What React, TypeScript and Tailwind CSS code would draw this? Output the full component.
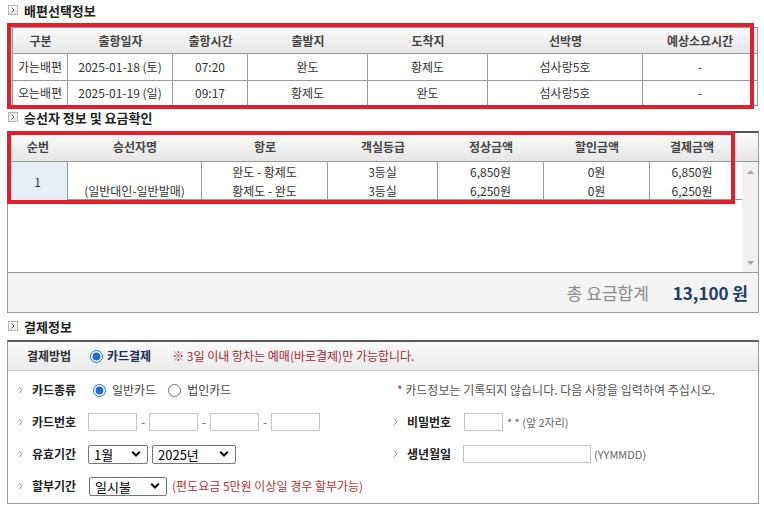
import type { ReactNode } from "react";

type Cell = string;

const TRIP_HEAD = ["구분", "출항일자", "출항시간", "출발지", "도착지", "선박명", "예상소요시간"];
const TRIP_ROWS: Cell[][] = [
  ["가는배편", "2025-01-18 (토)", "07:20", "완도", "황제도", "섬사랑5호", "-"],
  ["오는배편", "2025-01-19 (일)", "09:17", "황제도", "완도", "섬사랑5호", "-"],
];

const FARE_HEAD = ["순번", "승선자명", "항로", "객실등급", "정상금액", "할인금액", "결제금액", ""];
const FARE_COLS: [string, string][] = [
  ["", "(일반대인-일반발매)"],
  ["완도 - 황제도", "황제도 - 완도"],
  ["3등실", "3등실"],
  ["6,850원", "6,250원"],
  ["0원", "0원"],
  ["6,850원", "6,250원"],
];

function SectionTitle({ children }: { children: ReactNode }) {
  return (
    <div className="flex h-[20px] items-center gap-[6px] pl-[8px]">
      <span className="flex h-[10px] w-[10px] items-center justify-center border border-[#b5b5b5] bg-gradient-to-b from-white to-[#e9e9e9]">
        <svg width="4" height="6" viewBox="0 0 4 6">
          <path d="M0.6 0.6 L3 3 L0.6 5.4" fill="none" stroke="#555" strokeWidth="1" />
        </svg>
      </span>
      <h2 className="text-[13px] font-bold leading-none text-[#222]">{children}</h2>
    </div>
  );
}

function Chevron() {
  return (
    <svg width="5" height="8" viewBox="0 0 5 8" className="shrink-0">
      <path d="M1 1 L4 4 L1 7" fill="none" stroke="#9a9a9a" strokeWidth="1" />
    </svg>
  );
}

function Select({ value, className }: { value: string; className: string }) {
  return (
    <span className={`relative inline-flex ${className}`}>
      <select
        defaultValue={value}
        className="h-[19px] w-full appearance-none rounded-[2px] border border-[#767676] bg-white pl-[5px] text-[13px] leading-[17px] text-black"
      >
        <option>{value}</option>
      </select>
      <svg width="10" height="7" viewBox="0 0 10 7" className="pointer-events-none absolute right-[7px] top-1/2 -translate-y-1/2">
        <path d="M1.2 1.2 L5 5 L8.8 1.2" fill="none" stroke="#111" strokeWidth="2" />
      </svg>
    </span>
  );
}

function Field({ label, children }: { label: string; children?: ReactNode }) {
  return (
    <div className="flex h-[32px] items-center">
      <Chevron />
      <span className="ml-[9px] w-[56px] shrink-0 text-[12px] font-bold leading-none text-[#222]">{label}</span>
      {children}
    </div>
  );
}

export default function App() {
  return (
    <div className="relative h-[506px] w-[764px] overflow-hidden bg-white font-['Noto_Sans_CJK_KR','Noto_Sans',sans-serif] text-[#333]">
      <SectionTitle>배편선택정보</SectionTitle>

      {/* trip table */}
      <div className="ml-[12px] mt-[7px] w-[746px] border border-[#999]">
        <div className="grid h-[26px] grid-cols-[55px_105px_75px_120px_120px_155px_114px] items-center border-b border-[#999] bg-gradient-to-b from-[#fbfbfb] to-[#e6e6e6] text-center text-[12px] font-bold text-[#444]">
          {TRIP_HEAD.map((h) => (
            <span key={h}>{h}</span>
          ))}
        </div>
        {TRIP_ROWS.map((row, i) => (
          <div
            key={i}
            className={`grid grid-cols-[55px_105px_75px_120px_120px_155px_114px] text-center text-[12px] ${i === 0 ? "h-[27px] border-b border-[#999]" : "h-[24px]"}`}
          >
            {row.map((c, j) => (
              <span key={j} className={`flex items-center justify-center ${j < 6 ? "border-r border-[#999]" : ""}`}>
                {c}
              </span>
            ))}
          </div>
        ))}
      </div>

      <div className="mt-[1px]">
        <SectionTitle>승선자 정보 및 요금확인</SectionTitle>
      </div>

      {/* fare box */}
      <div className="ml-[7px] mt-[4px] w-[752px] border-x border-b border-t-2 border-x-[#999] border-b-[#999] border-t-[#555]">
        <div className="grid h-[29px] grid-cols-[60px_134px_126px_110px_106px_106px_84px_24px] items-center border-b border-[#999] bg-gradient-to-b from-[#fbfbfb] to-[#e6e6e6] text-center text-[12px] font-bold text-[#444]">
          {FARE_HEAD.map((h, i) => (
            <span key={i}>{h}</span>
          ))}
        </div>
        <div className="flex h-[110px]">
          <div className="flex-1">
            <div className="grid h-[38px] grid-cols-[60px_134px_126px_110px_106px_106px_84px_8px] border-b border-[#999] text-center text-[12px] leading-[19px]">
              <span className="flex items-center justify-center border-r border-[#999] bg-[#e8eef7]">1</span>
              {FARE_COLS.map((lines, j) => (
                <span key={j} className={`flex flex-col justify-center ${j < 5 ? "border-r border-[#999]" : ""}`}>
                  <span>{lines[0] || "\u00a0"}</span>
                  <span>{lines[1]}</span>
                </span>
              ))}
              <span />
            </div>
          </div>
          <div className="flex w-[16px] flex-col items-center justify-between bg-[#f1f1f1] pb-[7px] pt-[8px]">
            <svg width="7" height="4" viewBox="0 0 7 4">
              <path d="M0 4 L3.5 0 L7 4 Z" fill="#a6a6a6" />
            </svg>
            <svg width="7" height="4" viewBox="0 0 7 4">
              <path d="M0 0 L3.5 4 L7 0 Z" fill="#a6a6a6" />
            </svg>
          </div>
        </div>
        <div className="flex h-[40px] items-center justify-end gap-[24px] border-t border-[#999] bg-[#f4f4f4] pr-[10px]">
          <span className="text-[17px] leading-none text-[#8a8a8a]">총 요금합계</span>
          <span className="text-[17px] font-bold leading-none text-[#1d3b6a]">13,100 원</span>
        </div>
      </div>

      <div className="mt-[3px]">
        <SectionTitle>결제정보</SectionTitle>
      </div>

      {/* payment box */}
      <div className="ml-[7px] mt-[4px] w-[752px] border-x border-b border-t-2 border-x-[#999] border-b-[#999] border-t-[#5a5a5a]">
        <div className="flex h-[29px] items-center border-b border-[#cfcfcf] bg-gradient-to-b from-[#fafafa] to-[#ebebeb] pl-[19px] text-[12px] leading-none">
          <span className="w-[63px] font-bold text-[#333]">결제방법</span>
          <input type="radio" defaultChecked name="pay" className="m-0 h-[13px] w-[13px] accent-[#1a6fd8]" />
          <span className="ml-[4px] font-bold text-[#1e2d4d]">카드결제</span>
          <span className="ml-[21px] text-[#a3283a]">※ 3일 이내 항차는 예매(바로결제)만 가능합니다.</span>
        </div>

        <div className="grid grid-cols-[387px_1fr] pb-[1px] pt-[3px]">
          <div className="pl-[10px]">
            <Field label="카드종류">
              <label className="flex items-center gap-[6px] text-[12px] leading-none text-[#444]">
                <input type="radio" defaultChecked name="kind" className="m-0 ml-[5px] h-[13px] w-[13px] accent-[#1a6fd8]" />
                일반카드
              </label>
              <label className="ml-[12px] flex items-center gap-[6px] text-[12px] leading-none text-[#444]">
                <input type="radio" name="kind" className="m-0 h-[13px] w-[13px] accent-[#1a6fd8]" />
                법인카드
              </label>
            </Field>
          </div>
          <div className="flex h-[32px] items-center pl-[2px] text-[12px] leading-none text-[#555]">
            * 카드정보는 기록되지 않습니다. 다음 사항을 입력하여 주십시오.
          </div>

          <div className="pl-[10px]">
            <Field label="카드번호">
              <input className="h-[18px] w-[49px] border border-[#c4c4c4] bg-white" />
              <span className="w-[12px] text-center text-[12px] text-[#666]">-</span>
              <input className="h-[18px] w-[49px] border border-[#c4c4c4] bg-white" />
              <span className="w-[12px] text-center text-[12px] text-[#666]">-</span>
              <input className="h-[18px] w-[49px] border border-[#c4c4c4] bg-white" />
              <span className="w-[12px] text-center text-[12px] text-[#666]">-</span>
              <input className="h-[18px] w-[49px] border border-[#c4c4c4] bg-white" />
            </Field>
          </div>
          <div className="-ml-[2px]">
            <Field label="비밀번호">
              <span className="ml-[1px] flex items-center">
                <input className="h-[18px] w-[39px] border border-[#c4c4c4] bg-white" />
                <span className="ml-[4px] text-[11px] leading-none text-[#666]">* * (앞 2자리)</span>
              </span>
            </Field>
          </div>

          <div className="pl-[10px]">
            <Field label="유효기간">
              <Select value="1월" className="w-[60px]" />
              <Select value="2025년" className="ml-[4px] w-[84px]" />
            </Field>
          </div>
          <div className="-ml-[2px]">
            <Field label="생년월일">
              <input className="h-[18px] w-[128px] border border-[#c4c4c4] bg-white" />
              <span className="ml-[3px] text-[11px] leading-none text-[#666]">(YYMMDD)</span>
            </Field>
          </div>

          <div className="pl-[10px]">
            <Field label="할부기간">
              <Select value="일시불" className="ml-[1px] w-[78px]" />
              <span className="ml-[5px] text-[12px] leading-none text-[#b83232]">(편도요금 5만원 이상일 경우 할부가능)</span>
            </Field>
          </div>
          <div />
        </div>
      </div>

      {/* red annotation boxes */}
      <div className="pointer-events-none absolute left-[7px] top-[23px] h-[86px] w-[747px] border-[4px] border-[#e21f2b]" />
      <div className="pointer-events-none absolute left-[7px] top-[131px] h-[73px] w-[728px] border-[4px] border-[#e21f2b]" />
    </div>
  );
}
